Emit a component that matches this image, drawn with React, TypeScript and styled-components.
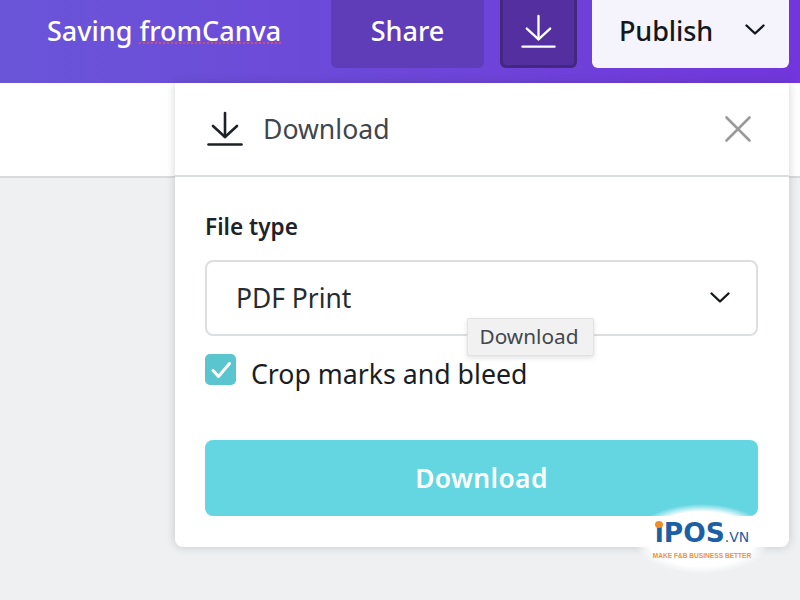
import React from 'react';
import styled, { createGlobalStyle } from 'styled-components';

const GlobalStyle = createGlobalStyle`
  html, body {
    margin: 0;
    padding: 0;
    height: 600px;
    overflow: hidden;
    font-family: 'Noto Sans', 'Open Sans', sans-serif;
  }
`;

const Page = styled.div`
  position: relative;
  width: 800px;
  height: 600px;
  overflow: hidden;
  background: #eef0f2;
`;

const TopBar = styled.header`
  height: 83px;
  box-sizing: border-box;
  padding: 0 11px 15px 47px;
  display: flex;
  align-items: stretch;
  background: linear-gradient(90deg, #6a55d8 0%, #6d47d8 50%, #7236dc 100%);
`;

const SavingLabel = styled.div`
  flex: 1;
  padding-bottom: 8px;
  display: flex;
  align-items: center;
  font-size: 27px;
  font-weight: 500;
  color: #fff;
`;

const Squiggle = styled.span`
  text-decoration: underline dotted #d4506c 2px;
  text-underline-offset: 2px;
`;

const ShareButton = styled.div`
  width: 153px;
  margin-right: 16px;
  padding-bottom: 8px;
  box-sizing: border-box;
  display: flex;
  align-items: center;
  justify-content: center;
  font-size: 27px;
  font-weight: 500;
  color: #fff;
  background: #5f3cb8;
  border-radius: 0 0 6px 6px;
`;

const DownloadButton = styled.div`
  width: 77px;
  box-sizing: border-box;
  margin-right: 15px;
  padding-bottom: 2px;
  display: flex;
  align-items: center;
  justify-content: center;
  background: #532fa0;
  border: 3px solid #43287f;
  border-top: none;
  border-radius: 0 0 6px 6px;
`;

const PublishButton = styled.div`
  width: 197px;
  box-sizing: border-box;
  padding: 0 24px 8px 27px;
  display: flex;
  align-items: center;
  justify-content: space-between;
  font-size: 27px;
  font-weight: 500;
  letter-spacing: -0.1px;
  color: #14181d;
  background: #f5f4fc;
  border-radius: 0 0 6px 6px;
`;

const SubBar = styled.div`
  height: 93px;
  background: #fff;
  border-bottom: 2px solid #d9dadb;
`;

const Panel = styled.section`
  position: absolute;
  left: 175px;
  top: 83px;
  width: 614px;
  height: 464px;
  background: #fff;
  border-radius: 0 0 8px 8px;
  box-shadow: 0 0 10px rgba(40, 50, 60, 0.22);
  display: flex;
  flex-direction: column;
`;

const PanelHeader = styled.div`
  height: 94px;
  box-sizing: border-box;
  padding: 0 37px 0 32px;
  display: flex;
  align-items: center;
  gap: 20px;
  border-bottom: 2px solid #dbdcdd;
`;

const PanelTitle = styled.div`
  flex: 1;
  font-size: 26.6px;
  color: #3f464e;
`;

const PanelBody = styled.div`
  padding: 35px 31px 0 30px;
  display: flex;
  flex-direction: column;
`;

const FieldLabel = styled.div`
  font-size: 22.6px;
  line-height: 30px;
  font-weight: 600;
  color: #1e2329;
`;

const Select = styled.div`
  height: 76px;
  margin-top: 18px;
  box-sizing: border-box;
  padding: 0 26px 0 29px;
  display: flex;
  align-items: center;
  justify-content: space-between;
  font-size: 26.4px;
  color: #262b31;
  border: 2px solid #dcdee0;
  border-radius: 8px;
`;

const CheckRow = styled.div`
  margin-top: 18px;
  display: flex;
  align-items: flex-start;
  gap: 15px;
`;

const CheckLabel = styled.div`
  font-size: 26.7px;
  line-height: 39px;
  color: #1a1e23;
`;

const CheckBox = styled.div`
  width: 31px;
  height: 31px;
  display: flex;
  align-items: center;
  justify-content: center;
  background: #5bc5cf;
  border-radius: 5px;
`;

const PrimaryButton = styled.div`
  height: 76px;
  margin-top: 47px;
  display: flex;
  align-items: center;
  justify-content: center;
  font-size: 26.4px;
  font-weight: 600;
  letter-spacing: 0.4px;
  color: #fff;
  background: #64d6e2;
  border-radius: 8px;
`;

const Tooltip = styled.div`
  position: absolute;
  left: 467px;
  top: 318px;
  width: 127px;
  height: 38px;
  box-sizing: border-box;
  padding: 0 3px 3px 0;
  display: flex;
  align-items: center;
  justify-content: center;
  font-size: 20.8px;
  color: #43474c;
  background: #f1f1f1;
  border: 1px solid #e2e2e2;
  border-radius: 2px;
  box-shadow: 0 2px 5px rgba(0, 0, 0, 0.12);
`;

const LogoBadge = styled.div`
  position: absolute;
  left: 633px;
  top: 504px;
  width: 138px;
  height: 70px;
  display: flex;
  flex-direction: column;
  align-items: center;
  justify-content: center;
  background: radial-gradient(ellipse closest-side, #fff 78%, rgba(255, 255, 255, 0) 100%);
`;

const LogoMark = styled.div`
  position: relative;
  font-family: 'DejaVu Sans', sans-serif;
  font-size: 26.5px;
  line-height: 30px;
  font-weight: 700;
  color: #1b5fa4;
  white-space: nowrap;
`;

const LogoDomain = styled.span`
  font-size: 14px;
  font-weight: 400;
`;

const LogoDot = styled.span`
  position: absolute;
  left: 0;
  top: 3px;
  width: 8px;
  height: 7px;
  border-radius: 50%;
  background: #f28c28;
`;

const LogoTagline = styled.div`
  font-family: 'Liberation Sans', sans-serif;
  font-size: 6.6px;
  line-height: 8px;
  font-weight: 700;
  color: #f0923a;
  white-space: nowrap;
`;

const DownloadIcon: React.FC<{ size: number; color: string; strokeWidth: number }> = ({ size, color, strokeWidth }) => (
  <svg width={size} height={size} viewBox="0 0 36 36" fill="none" stroke={color} strokeWidth={strokeWidth} strokeLinecap="round" strokeLinejoin="round">
    <path d="M18 2v24" />
    <path d="M6 15l12 11 12-11" />
    <path d="M1.500 33.500h33" />
  </svg>
);

const Chevron: React.FC<{ size: number }> = ({ size }) => (
  <svg width={size} height={size} viewBox="0 0 20 20" fill="none" stroke="#14181d" strokeWidth="2.4" strokeLinecap="round" strokeLinejoin="round">
    <path d="M1.500 5.500L10 13.500l8.500-8" />
  </svg>
);

const App: React.FC = () => {
  return (
    <Page>
      <GlobalStyle />
      <TopBar>
        <SavingLabel>
          <span>
            Saving <Squiggle>fromCanva</Squiggle>
          </span>
        </SavingLabel>
        <ShareButton>Share</ShareButton>
        <DownloadButton>
          <DownloadIcon size={35} color="#fff" strokeWidth={2.4} />
        </DownloadButton>
        <PublishButton>
          Publish
          <Chevron size={20} />
        </PublishButton>
      </TopBar>
      <SubBar />

      <Panel>
        <PanelHeader>
          <DownloadIcon size={36} color="#1c2127" strokeWidth={2.6} />
          <PanelTitle>Download</PanelTitle>
          <svg width="28" height="28" viewBox="0 0 28 28" stroke="#9a9a9a" strokeWidth="2.6" strokeLinecap="round">
            <path d="M2.500 2.500l23 23M25.500 2.500l-23 23" />
          </svg>
        </PanelHeader>
        <PanelBody>
          <FieldLabel>File type</FieldLabel>
          <Select>
            PDF Print
            <Chevron size={20} />
          </Select>
          <CheckRow>
            <CheckBox>
              <svg width="22" height="22" viewBox="0 0 22 22" fill="none" stroke="#fff" strokeWidth="3" strokeLinecap="round" strokeLinejoin="round">
                <path d="M3 11.500l5.500 6L19.500 4.500" />
              </svg>
            </CheckBox>
            <CheckLabel>Crop marks and bleed</CheckLabel>
          </CheckRow>
          <PrimaryButton>Download</PrimaryButton>
        </PanelBody>
      </Panel>

      <Tooltip>Download</Tooltip>

      <LogoBadge>
        <LogoMark>
          <LogoDot />
          iPOS<LogoDomain>.VN</LogoDomain>
        </LogoMark>
        <LogoTagline>MAKE F&amp;B BUSINESS BETTER</LogoTagline>
      </LogoBadge>
    </Page>
  );
};

export default App;
